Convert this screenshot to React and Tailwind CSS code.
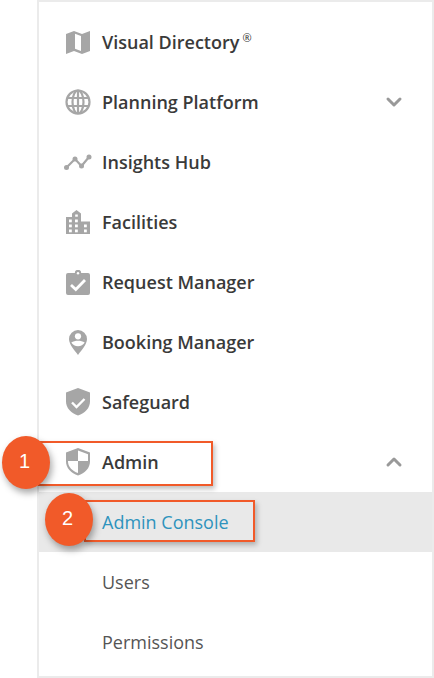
import React from "react";
import { ChevronDown, ChevronUp } from "lucide-react";

const iconGray = "#a6a6a6";

const MapIcon = () => (
  <svg width="24" height="23" viewBox="0 0 24 23">
    <path fill={iconGray} d="M0 3 8 0l8 3 8-3v20l-8 3-8-3-8 3z" />
    <path fill="#fff" d="M9 2.800 15 5v15l-6-2.200z" />
  </svg>
);

const GlobeIcon = () => (
  <svg width="26" height="26" viewBox="0 0 26 26" fill="none" stroke={iconGray} strokeWidth="2.200">
    <circle cx="13" cy="13" r="11.500" />
    <ellipse cx="13" cy="13" rx="5.500" ry="11.500" />
    <path d="M13 1.500v23M2.500 9h21M2.500 17h21" />
  </svg>
);

const TrendIcon = () => (
  <svg width="28" height="16" viewBox="0 0 28 16" fill={iconGray} stroke={iconGray}>
    <path d="M2.500 13.500 11 5l6.500 7L25 3" fill="none" strokeWidth="2.200" />
    <circle cx="2.500" cy="13.500" r="2.500" stroke="none" />
    <circle cx="11" cy="5" r="2.500" stroke="none" />
    <circle cx="17.500" cy="12" r="2.500" stroke="none" />
    <circle cx="25" cy="3" r="2.500" stroke="none" />
  </svg>
);

const BuildingIcon = () => (
  <svg width="24" height="24" viewBox="0 0 24 24">
    <path fill={iconGray} d="M0 7h6V3.500L10.500 0 15 3.500V11.500h9V24H0z" />
    <g fill="#fff">
      <rect x="9.200" y="4.500" width="2.600" height="2.200" />
      <rect x="3" y="9.500" width="2.800" height="2.800" />
      <rect x="9" y="9.500" width="2.800" height="2.800" />
      <rect x="3" y="14.500" width="2.800" height="2.800" />
      <rect x="9" y="14.500" width="2.800" height="2.800" />
      <rect x="18" y="14.500" width="2.800" height="2.800" />
      <rect x="3" y="19.500" width="2.800" height="2.800" />
      <rect x="9" y="19.500" width="2.800" height="2.800" />
      <rect x="18" y="19.500" width="2.800" height="2.800" />
    </g>
  </svg>
);

const ClipboardIcon = () => (
  <svg width="24" height="25" viewBox="0 0 24 25">
    <path
      fill={iconGray}
      d="M2 3h6.800a3.200 3.200 0 0 1 6.400 0H22a2 2 0 0 1 2 2v18a2 2 0 0 1-2 2H2a2 2 0 0 1-2-2V5a2 2 0 0 1 2-2z"
    />
    <circle cx="12" cy="3.200" r="1.200" fill="#fff" />
    <path d="M5 15 9.800 19.500 19 10" fill="none" stroke="#fff" strokeWidth="2.800" />
  </svg>
);

const PinIcon = () => (
  <svg width="18" height="25" viewBox="0 0 18 25">
    <path
      fill={iconGray}
      d="M9 0a9 9 0 0 1 9 9c0 5.500-5.500 11-9 16C5.500 20 0 14.500 0 9a9 9 0 0 1 9-9z"
    />
    <circle cx="9" cy="6.300" r="3.100" fill="#fff" />
    <path d="M2.300 12.500c1.800-1.300 4.200-1.800 6.700-1.800s4.900.5 6.700 1.800c-1.400 2.400-3.900 3.800-6.700 3.800s-5.300-1.400-6.700-3.800z" fill="#fff" />
  </svg>
);

const ShieldCheckIcon = () => (
  <svg width="24" height="28" viewBox="0 0 24 28">
    <path fill={iconGray} d="M12 0 24 4.500v9c0 6.500-5 11.500-12 14C5 25 0 20 0 13.500v-9z" />
    <path d="M6 14.500 10.500 19l8-8" fill="none" stroke="#fff" strokeWidth="2.400" />
  </svg>
);

const ShieldHalfIcon = () => (
  <svg width="24" height="28" viewBox="0 0 24 28">
    <path fill={iconGray} d="M12 0 24 4.500v9c0 6.500-5 11.500-12 14C5 25 0 20 0 13.500v-9z" />
    <path fill="#fff" d="M12 2.500 22 6.200V13H12z" />
    <path fill="#fff" d="M12 13H2v.5c0 5 4 9.500 10 11.600z" />
  </svg>
);

const topItems = [
  { label: "Visual Directory", icon: <MapIcon />, reg: true },
  { label: "Planning Platform", icon: <GlobeIcon />, chevron: "down" },
  { label: "Insights Hub", icon: <TrendIcon /> },
  { label: "Facilities", icon: <BuildingIcon /> },
  { label: "Request Manager", icon: <ClipboardIcon /> },
  { label: "Booking Manager", icon: <PinIcon /> },
  { label: "Safeguard", icon: <ShieldCheckIcon /> },
  { label: "Admin", icon: <ShieldHalfIcon />, chevron: "up" },
];

const subItems = ["Admin Console", "Users", "Permissions"];

const Callout = ({ number, className }) => (
  <div
    className={`absolute flex h-[53px] w-[48px] items-center justify-center rounded-[50%] bg-[#f15a29] pb-[3px] pr-[3px] font-['Liberation_Sans',sans-serif] text-[20px] text-white shadow-[2px_4px_7px_rgba(0,0,0,0.35)] ${className}`}
  >
    {number}
  </div>
);

const App = () => {
  return (
    <div className="relative h-[678px] w-[434px] overflow-hidden bg-white font-['Open_Sans',sans-serif]">
      <div className="ml-[37px] h-[678px] border-2 border-[#ebebeb] pt-[10px]">
        {topItems.map((item) => (
          <div key={item.label} className="flex h-[60px] items-center pr-[26px]">
            <div className="flex w-[63px] shrink-0 justify-center pl-[15px]">{item.icon}</div>
            <span className="text-[18px] font-semibold text-[#3a3a3a]">{item.label}</span>
            {item.reg && <span className="mb-2 ml-[3px] text-[11px] text-[#333333]">®</span>}
            {item.chevron === "down" && <ChevronDown className="ml-auto" size={24} color="#999999" strokeWidth={3} />}
            {item.chevron === "up" && <ChevronUp className="ml-auto" size={24} color="#999999" strokeWidth={3} />}
          </div>
        ))}
        {subItems.map((label, i) => (
          <div
            key={label}
            className={`flex h-[60px] items-center pl-[63px] text-[18px] ${
              i === 0 ? "bg-[#e9e9e9] text-[#2e93bd]" : "text-[#555555]"
            }`}
          >
            {label}
          </div>
        ))}
      </div>

      {/* annotation boxes */}
      <div className="absolute left-[38px] top-[441px] h-[45px] w-[175px] border-2 border-[#f15a29] shadow-[2px_3px_5px_rgba(0,0,0,0.25)]" />
      <div className="absolute left-[84px] top-[500px] h-[42px] w-[171px] border-2 border-[#f15a29] shadow-[2px_3px_5px_rgba(0,0,0,0.25)]" />
      <Callout number="1" className="left-[2px] top-[436px]" />
      <Callout number="2" className="left-[45px] top-[493px]" />
    </div>
  );
};

export default App;
